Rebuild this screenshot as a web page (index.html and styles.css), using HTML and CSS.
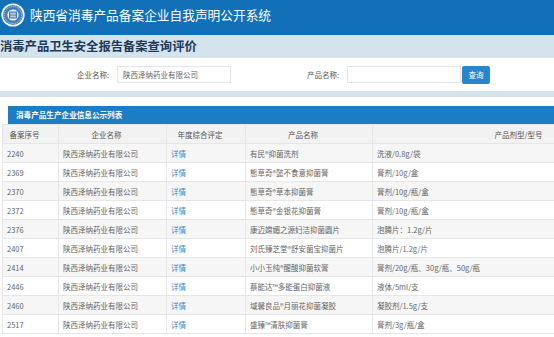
FILE: index.html
```html
<!DOCTYPE html>
<html lang="zh-CN">

<head>
  <meta charset="UTF-8" />
  <meta name="viewport" content="width=device-width, initial-scale=1.0" />
  <link rel="stylesheet" href="styles.css">
</head>

<body>
  <div class="top">
    <svg class="logo" width="24" height="24" viewBox="0 0 24 24">
      <circle cx="12" cy="12" r="11.6" fill="#ffffff" />
      <circle cx="12" cy="12" r="10" fill="#3f7fc0" />
      <circle cx="12" cy="12" r="8.6" fill="none" stroke="#dbe8f5" stroke-width="0.8" stroke-dasharray="1 1" />
      <circle cx="12" cy="12" r="5.6" fill="#ffffff" />
      <rect x="8.6" y="9" width="6.8" height="6" fill="none" stroke="#2a6aa8" stroke-width="1" />
      <path d="M10 9v6M12 9v6M14 9v6M8 12h8" stroke="#2a6aa8" stroke-width="0.7" />
    </svg>
    <span class="site-name">陕西省消毒产品备案企业自我声明公开系统</span>
  </div>

  <div class="crumb">消毒产品卫生安全报告备案查询评价</div>

  <div class="search">
    <label class="label first">企业名称:</label>
    <input class="field" type="text" value="陕西泽纳药业有限公司" />
    <label class="label second">产品名称:</label>
    <input class="field" type="text" value="" />
    <button class="btn">查询</button>
  </div>
  <div class="band"></div>

  <div class="list">
    <div class="list-title">消毒产品生产企业信息公示列表</div>
    <div class="table-wrap">
      <table class="grid">
        <colgroup>
          <col style="width:56px">
          <col style="width:108px">
          <col style="width:79px">
          <col style="width:127px">
          <col style="width:304px">
        </colgroup>
        <thead>
          <tr>
            <th>备案序号</th>
            <th>企业名称</th>
            <th>年度综合评定</th>
            <th>产品名称</th>
            <th>产品剂型/型号</th>
          </tr>
        </thead>
        <tbody>
          <tr><td>2240</td><td>陕西泽纳药业有限公司</td><td><a href="#">详情</a></td><td>有民®抑菌洗剂</td><td>洗液/0.8g/袋</td></tr>
          <tr><td>2369</td><td>陕西泽纳药业有限公司</td><td><a href="#">详情</a></td><td>態草奇®懿不食意抑菌膏</td><td>膏剂/10g/盒</td></tr>
          <tr><td>2370</td><td>陕西泽纳药业有限公司</td><td><a href="#">详情</a></td><td>態草奇®草本抑菌膏</td><td>膏剂/10g/瓶/盒</td></tr>
          <tr><td>2372</td><td>陕西泽纳药业有限公司</td><td><a href="#">详情</a></td><td>態草奇®金银花抑菌膏</td><td>膏剂/10g/瓶/盒</td></tr>
          <tr><td>2376</td><td>陕西泽纳药业有限公司</td><td><a href="#">详情</a></td><td>康迈嫦媚之源妇洁抑菌圆片</td><td>泡腾片：1.2g/片</td></tr>
          <tr><td>2407</td><td>陕西泽纳药业有限公司</td><td><a href="#">详情</a></td><td>刘氏臻芝堂®舒安菌宝抑菌片</td><td>泡腾片/1.2g/片</td></tr>
          <tr><td>2414</td><td>陕西泽纳药业有限公司</td><td><a href="#">详情</a></td><td>小小玉纯®醒酸抑菌软膏</td><td>膏剂/20g/瓶、30g/瓶、50g/瓶</td></tr>
          <tr><td>2446</td><td>陕西泽纳药业有限公司</td><td><a href="#">详情</a></td><td>蔡能达™多能蛋白抑菌液</td><td>液体/5ml/支</td></tr>
          <tr><td>2460</td><td>陕西泽纳药业有限公司</td><td><a href="#">详情</a></td><td>域馨良品®月丽花抑菌凝胶</td><td>凝胶剂/1.5g/支</td></tr>
          <tr><td>2517</td><td>陕西泽纳药业有限公司</td><td><a href="#">详情</a></td><td>盛臻™清肤抑菌膏</td><td>膏剂/3g/瓶/盒</td></tr>
        </tbody>
      </table>
    </div>
  </div>
</body>

</html>
```

FILE: styles.css
```css
html,
body {
  margin: 0;
  padding: 0;
  overflow: hidden;
  background: #ffffff;
  font-family: "Noto Sans CJK SC", "Noto Sans", sans-serif;
}

.top {
  display: flex;
  align-items: center;
  height: 35px;
  padding-left: 1px;
  background-color: #1170b8;
}

.top .logo {
  flex-shrink: 0;
  margin-top: -5px;
}

.top .site-name {
  margin-left: 5px;
  margin-top: -6px;
  color: #ffffff;
  font-size: 12.7px;
  letter-spacing: 0;
  white-space: nowrap;
}

.crumb {
  height: 23px;
  line-height: 23px;
  background-color: #d5e3ec;
  color: #1c3a5c;
  font-size: 12.3px;
  font-weight: bold;
  white-space: nowrap;
}

.search {
  display: flex;
  align-items: center;
  height: 33px;
  padding-left: 77px;
  background-color: #ffffff;
}

.search .label {
  width: 37px;
  color: #555555;
  font-size: 7.5px;
  white-space: nowrap;
}

.search .label.second {
  margin-left: 76px;
}

.search .field {
  box-sizing: border-box;
  width: 114px;
  height: 17px;
  margin: 0 0 0 3px;
  padding: 0 5px;
  border: 1px solid #e2e6ea;
  border-radius: 0;
  color: #666666;
  font-family: inherit;
  font-size: 7.5px;
  outline: none;
}

.search .btn {
  box-sizing: border-box;
  width: 28px;
  height: 18px;
  margin-left: 1px;
  padding: 0;
  border: none;
  border-radius: 2px;
  background-color: #2a86ca;
  color: #ffffff;
  font-family: inherit;
  font-size: 7.5px;
}

.band {
  height: 6px;
  background-color: #d5e3ec;
}

.list {
  padding-top: 9px;
}

.list-title {
  height: 18px;
  line-height: 18px;
  margin-left: 8px;
  padding-left: 8px;
  background-color: #1b7dc3;
  color: #ffffff;
  font-size: 7.6px;
  font-weight: bold;
  white-space: nowrap;
}

.table-wrap {
  overflow: hidden;
  padding-left: 2px;
}

.grid {
  table-layout: fixed;
  width: 674px;
  border-collapse: collapse;
  font-size: 7.5px;
  color: #666666;
}

.grid th,
.grid td {
  height: 18px;
  border: 1px solid #e6e6e6;
  white-space: nowrap;
  overflow: hidden;
}

.grid th {
  height: 18px;
  padding: 0 12px 0 0;
  background-color: #f2f2f2;
  color: #555555;
  font-weight: normal;
  text-align: center;
}

.grid td {
  padding: 0 0 0 4px;
  text-align: left;
}

.grid tbody tr:nth-child(odd) td {
  background-color: #f6f6f6;
}

.grid td a {
  color: #3a86c8;
  text-decoration: none;
}
```
